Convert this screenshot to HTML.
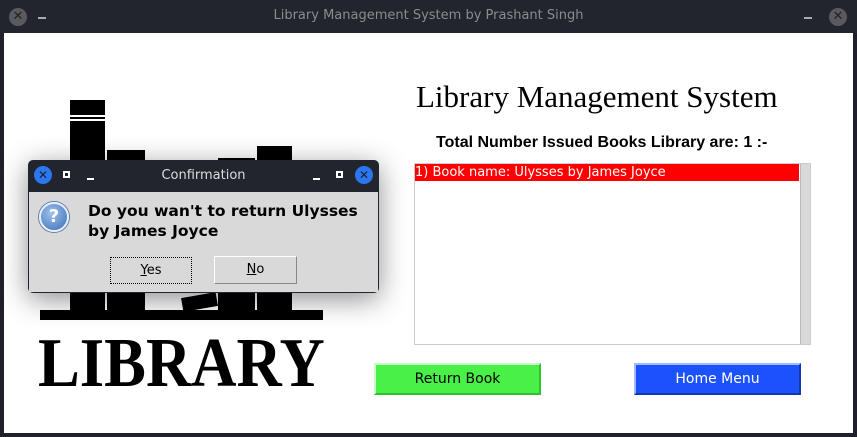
<!DOCTYPE html>
<html><head><style>
*{margin:0;padding:0;box-sizing:border-box}
body{width:857px;height:437px;background:#1f2029;position:relative;overflow:hidden;font-family:"DejaVu Sans","Liberation Sans",sans-serif}
.abs{position:absolute}
.tb{left:0;top:0;width:857px;height:33px;background:#22242e}
.content{left:4px;top:33px;width:849px;height:400px;background:#fff}
.bk{position:absolute;background:#000}
.btn{position:absolute;font-size:14px;text-align:center;line-height:28px}
</style></head><body>
<div class="abs tb"></div>
<div class="abs" style="left:9px;top:8px;width:18px;height:18px;border-radius:50%;background:#5a5a5e;color:#1f2029;font-size:13px;font-weight:bold;text-align:center;line-height:18px">✕</div>
<div class="abs" style="left:38px;top:17px;width:8px;height:2px;background:#aaa"></div>
<div class="abs" style="left:0;top:8px;width:857px;text-align:center;color:#8c8c8c;font-size:13px">Library Management System by Prashant Singh</div>
<div class="abs" style="left:804px;top:17px;width:8px;height:2px;background:#aaa"></div>
<div class="abs" style="left:829px;top:8px;width:18px;height:18px;border-radius:50%;background:#5a5a5e;color:#1f2029;font-size:13px;font-weight:bold;text-align:center;line-height:18px">✕</div>
<div class="abs content"></div>
<!-- books -->
<div class="bk" style="left:70px;top:100px;width:35px;height:210px"></div>
<div class="abs" style="left:70px;top:115px;width:35px;height:2px;background:#fff"></div>
<div class="abs" style="left:70px;top:119px;width:35px;height:2px;background:#fff"></div>
<div class="bk" style="left:107px;top:150px;width:38px;height:160px"></div>
<div class="bk" style="left:218px;top:158px;width:37px;height:152px"></div>
<div class="bk" style="left:257px;top:146px;width:35px;height:164px"></div>
<div class="bk" style="left:182px;top:295px;width:35px;height:14px;transform:rotate(-10deg)"></div>
<div class="bk" style="left:40px;top:310px;width:283px;height:10px"></div>
<div class="abs" style="left:38px;top:329px;font-family:'Liberation Serif',serif;font-weight:bold;font-size:70px;line-height:70px;transform:scaleX(0.895);transform-origin:left;white-space:nowrap">LIBRARY</div>
<!-- right -->
<div class="abs" style="left:416px;top:77px;font-family:'Liberation Serif',serif;font-size:31px;line-height:40px">Library Management System</div>
<div class="abs" style="left:436px;top:134px;font-family:'Liberation Sans',sans-serif;font-weight:bold;font-size:16px">Total Number Issued Books Library are: 1 :-</div>
<div class="abs" style="left:414px;top:163px;width:397px;height:182px;border:1px solid #ccc;background:#fff"></div>
<div class="abs" style="left:415px;top:164px;width:384px;height:17px;background:#f00;color:#fff;font-size:13px;line-height:17px">1) Book name: Ulysses by James Joyce</div>
<div class="abs" style="left:800px;top:164px;width:10px;height:180px;background:#d9d9d9;border-left:1px solid #bbb"></div>
<div class="btn" style="left:374px;top:363px;width:167px;height:32px;background:#48f048;border:2px solid #2fc22f;border-top-color:#c9f9c9;border-left-color:#c9f9c9">Return Book</div>
<div class="btn" style="left:634px;top:363px;width:167px;height:32px;background:#1c52fc;color:#fff;border:2px solid #1238b0;border-top-color:#a6b8fc;border-left-color:#a6b8fc">Home Menu</div>
<!-- dialog -->
<div class="abs" style="left:28px;top:160px;width:351px;height:133px;border-radius:5px;background:#22242e;box-shadow:0 6px 28px rgba(0,0,0,.45)"></div>
<div class="abs" style="left:29px;top:192px;width:349px;height:100px;background:#d9d9d9"></div>
<div class="abs" style="left:34px;top:166px;width:18px;height:18px;border-radius:50%;background:#2a77f0;color:#1f2029;font-size:12px;font-weight:bold;text-align:center;line-height:18px">✕</div>
<div class="abs" style="left:63px;top:171px;width:7px;height:7px;border:2px solid #fff"></div>
<div class="abs" style="left:87px;top:178px;width:7px;height:2px;background:#fff"></div>
<div class="abs" style="left:28px;top:168px;width:351px;text-align:center;color:#ddd;font-size:13px">Confirmation</div>
<div class="abs" style="left:313px;top:178px;width:7px;height:2px;background:#fff"></div>
<div class="abs" style="left:336px;top:171px;width:7px;height:7px;border:2px solid #fff"></div>
<div class="abs" style="left:355px;top:166px;width:18px;height:18px;border-radius:50%;background:#2a77f0;color:#1f2029;font-size:12px;font-weight:bold;text-align:center;line-height:18px">✕</div>
<div class="abs" style="left:39px;top:202px;width:30px;height:30px;border-radius:50%;background:radial-gradient(circle at 40% 35%,#9ec0ea,#3a6eb8);border:2px solid #e8eef8;box-shadow:0 0 0 1px #5a7fb0;color:#fff;font-weight:bold;font-size:18px;text-align:center;line-height:26px">?</div>
<div class="abs" style="left:88px;top:201px;font-weight:bold;font-size:15.5px;line-height:20px;color:#000">Do you wan't to return Ulysses<br>by James Joyce</div>
<div class="abs" style="left:110px;top:257px;width:82px;height:27px;border:1px dotted #000;background:#d9d9d9;font-size:13px;text-align:center;line-height:25px"><u>Y</u>es</div>
<div class="abs" style="left:214px;top:256px;width:83px;height:28px;border:1px solid #888;border-top-color:#fff;border-left-color:#fff;background:#d9d9d9;font-size:13px;text-align:center;line-height:26px"><u>N</u>o</div>
</body></html>
